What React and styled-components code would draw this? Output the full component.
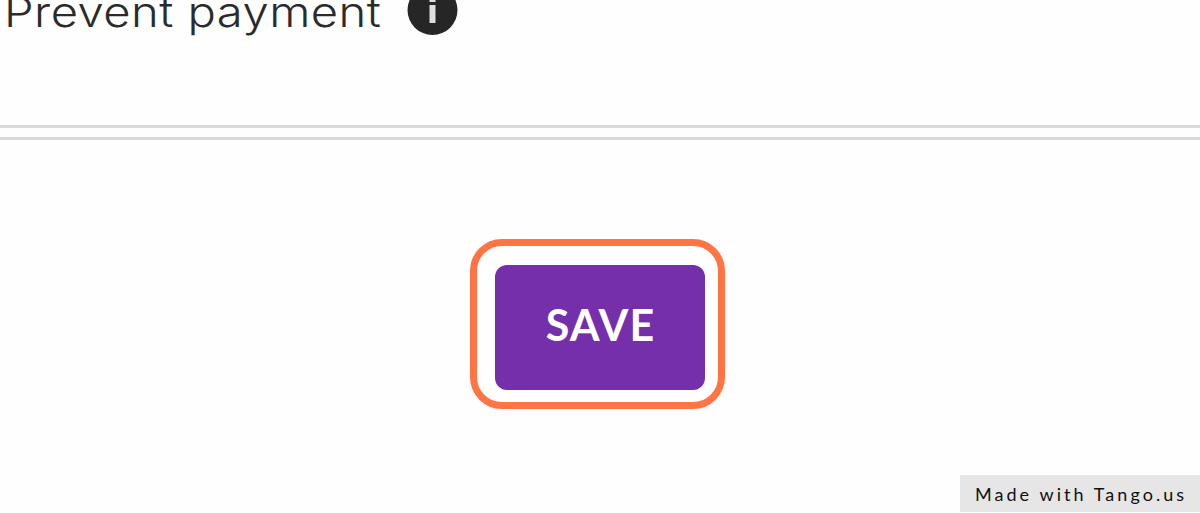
import styled, { createGlobalStyle } from "styled-components";

const GlobalStyle = createGlobalStyle`
* {
  box-sizing: border-box;
}
body {
  margin: 0;
  background: #fefefe;
  overflow: hidden;
}
`
const Page = styled.main`
display: flex;
flex-direction: column;
width: 1200px;
height: 513px;
overflow: hidden;
`
const OptionRow = styled.div`
display: flex;
align-items: flex-start;
height: 125px;
padding-left: 4px;
`
const OptionLabel = styled.span`
width: 403px;
margin-top: -18px;
font-family: "Inter", sans-serif;
font-size: 41px;
font-weight: 350;
line-height: 60px;
letter-spacing: 0.4px;
white-space: nowrap;
color: #2b2b2b;
transform: scaleX(1.15);
transform-origin: left;
`
const InfoIcon = styled.svg`
flex: none;
width: 51px;
height: 51px;
margin-top: -15px;
`
const Divider = styled.div`
height: 15px;
border-top: 3px solid #dadada;
border-bottom: 3px solid #d8d8d8;
`
const Actions = styled.div`
flex: 1;
display: flex;
align-items: flex-start;
padding: 99px 0 0 470px;
`
const Highlight = styled.div`
padding: 19px 13px 12px 18px;
border: 7px solid #ff7442;
border-radius: 32px;
background: #fff;
`
const SaveButton = styled.button`
display: block;
width: 210px;
height: 125px;
padding: 0 0 6px 1px;
border: none;
border-radius: 12px;
background: #752fab;
color: #fff;
font-family: "Lato", sans-serif;
font-size: 43px;
font-weight: 700;
line-height: 50px;
letter-spacing: 1.2px;
`
const Badge = styled.footer`
align-self: flex-end;
width: 240px;
height: 37px;
margin-bottom: 1px;
padding-left: 15px;
background: #e6e6e6;
color: #111;
font-family: "Lato", sans-serif;
font-size: 18px;
line-height: 39px;
letter-spacing: 3.05px;
white-space: nowrap;
`

const App = () => {
    return (
    <>
        <GlobalStyle />
        <Page>
            <OptionRow>
                <OptionLabel>Prevent payment</OptionLabel>
                <InfoIcon viewBox="0 0 51 51">
                    <circle cx="25.5" cy="25" r="25" fill="#262626" />
                    <path d="M22.5 11h6v6h-6zM22.5 20h6v18h-6z" fill="#dedede" />
                </InfoIcon>
            </OptionRow>
            <Divider />
            <Actions>
                <Highlight>
                    <SaveButton type="button">SAVE</SaveButton>
                </Highlight>
            </Actions>
            <Badge>Made with Tango.us</Badge>
        </Page>
    </>)
}
export default App;
